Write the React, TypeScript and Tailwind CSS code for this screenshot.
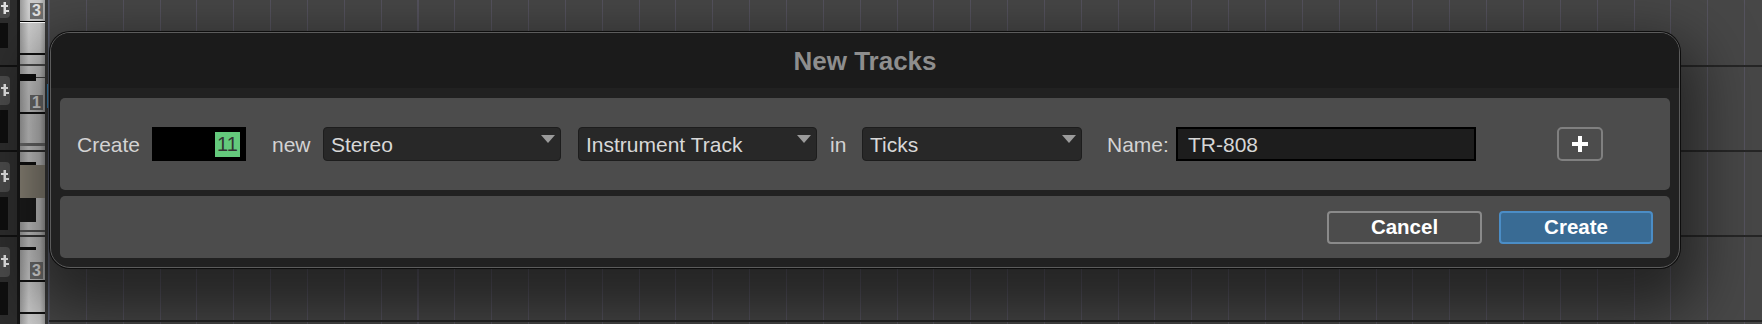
import React from "react";

const Arrow = () => (
  <svg width="14" height="8" viewBox="0 0 14 8" className="mt-[7px] shrink-0">
    <polygon points="0,0 14,0 7,8" fill="#9b9b9b" />
  </svg>
);

const Select = ({ label, className }: { label: string; className: string }) => (
  <div className={`flex h-[34px] shrink-0 items-start justify-between rounded-[4px] border border-[#1d1d1d] bg-[#282828] pl-[7px] pr-[5px] ${className}`}>
    <span className="self-center text-[21px] leading-none text-[#d8d8d8]">{label}</span>
    <Arrow />
  </div>
);

const TrackBtn = ({ className }: { className: string }) => (
  <div className={`flex w-[10px] items-center justify-end overflow-hidden bg-[#4b4b4b] ${className}`}>
    <svg width="9" height="14" viewBox="0 0 9 14">
      <rect x="0" y="3" width="7" height="2" fill="#e2e2e2" />
      <rect x="2.5" y="0" width="2.5" height="12" fill="#e2e2e2" />
      <rect x="4" y="8" width="4" height="2" fill="#e2e2e2" />
    </svg>
  </div>
);

const Badge = ({ n, className }: { n: string; className: string }) => (
  <div className={`ml-[10px] flex w-[13px] items-center justify-center bg-[#6f6f6f] text-[16px] font-bold leading-none text-[#e4e4e4] ${className}`}>
    {n}
  </div>
);

const App = () => {
  return (
    <div className="relative flex h-[324px] w-[1762px] overflow-hidden bg-[#474747] font-['Liberation_Sans',Arial,sans-serif]">
      {/* track headers strip */}
      <div className="flex h-full w-[49px] shrink-0">
        <div className="flex w-[17px] flex-col bg-[#2d2d2d]">
          <TrackBtn className="h-[18px] rounded-br-[4px]" />
          <div className="h-[5px]" />
          <div className="h-[25px] w-[8px] bg-[#0f0f0f]" />
          <div className="h-[17px]" />
          <div className="h-[2px] bg-[#111]" />
          <div className="h-[9px]" />
          <TrackBtn className="h-[29px] rounded-r-[4px]" />
          <div className="h-[5px]" />
          <div className="h-[33px] w-[8px] bg-[#0f0f0f]" />
          <div className="h-[7px]" />
          <div className="h-[2px] bg-[#111]" />
          <div className="h-[10px]" />
          <TrackBtn className="h-[30px] rounded-r-[4px]" />
          <div className="h-[5px]" />
          <div className="h-[33px] w-[8px] bg-[#0f0f0f]" />
          <div className="h-[5px]" />
          <div className="h-[2px] bg-[#111]" />
          <div className="h-[10px]" />
          <TrackBtn className="h-[30px] rounded-r-[4px]" />
          <div className="h-[5px]" />
          <div className="h-[33px] w-[8px] bg-[#0f0f0f]" />
        </div>
        <div className="w-[3px] bg-[#161616]" />
        <div className="flex w-[25px] flex-col bg-[linear-gradient(to_right,#9a9a9a,#d0d0d0_35%,#c8c8c8_80%,#a2a2a2)]">
          <div className="flex h-[21px] flex-col pt-[3px]">
            <Badge n="3" className="h-[16px]" />
          </div>
          <div className="h-[1px] bg-black" />
          <div className="h-[1px] bg-white" />
          <div className="h-[30px]" />
          <div className="h-[2px] bg-[#111]" />
          <div className="h-[9px]" />
          <div className="h-[2px] bg-[#4a4a4a]" />
          <div className="h-[8px]" />
          <div className="flex h-[7px] items-center">
            <div className="h-full w-[16px] bg-[#0f0f0f]" />
            <div className="h-[1px] flex-1 bg-[#444]" />
          </div>
          <div className="flex h-[31px] flex-col pt-[14px]">
            <Badge n="1" className="h-[15px]" />
          </div>
          <div className="h-[2px] bg-[#111]" />
          <div className="h-[29px]" />
          <div className="h-[3px] bg-[#6a6a6a]" />
          <div className="h-[4px]" />
          <div className="h-[2px] bg-[#333]" />
          <div className="h-[10px]" />
          <div className="h-[3px] w-[16px] bg-[#0f0f0f]" />
          <div className="h-[33px] bg-[#8a8477]" />
          <div className="flex h-[24px]">
            <div className="h-full w-[16px] bg-[#1c1c1c]" />
          </div>
          <div className="h-[8px]" />
          <div className="h-[2px] bg-[#555]" />
          <div className="h-[3px]" />
          <div className="h-[2px] bg-[#3a3a3a]" />
          <div className="h-[10px]" />
          <div className="h-[3px] w-[16px] bg-[#0f0f0f]" />
          <div className="flex h-[30px] flex-col pt-[12px]">
            <Badge n="3" className="h-[17px]" />
          </div>
          <div className="h-[2px] bg-[#111]" />
          <div className="h-[30px]" />
          <div className="h-[2px] bg-[#111]" />
        </div>
        <div className="flex w-[4px] flex-col border-r border-[#5a6070] bg-[#3a3a3a]">
          <div className="h-[84px]" />
          <div className="ml-auto h-[24px] w-[1px] bg-[#3f8fc4]" />
        </div>
      </div>

      {/* arrange grid */}
      <div className="flex flex-1 flex-col bg-[repeating-linear-gradient(to_right,#55535e_0px,#55535e_1px,transparent_1px,transparent_36.85px)]">
        <div className="h-[67px] border-b-2 border-[#262626]" />
        <div className="h-[85px] border-b-2 border-[#262626]" />
        <div className="h-[85px] border-b-2 border-[#262626]" />
        <div className="h-[85px] border-b-2 border-[#262626]" />
      </div>

      {/* New Tracks dialog */}
      <div className="absolute left-[50px] top-[32px] flex h-[236px] w-[1630px] flex-col overflow-hidden rounded-[20px] border border-[#5c5c5c] bg-[#212121] shadow-[0_0_0_1px_#0d0d0d,0_26px_60px_18px_rgba(0,0,0,0.5)]">
        <div className="flex h-[55px] shrink-0 items-center justify-center bg-[#1b1b1b]">
          <h1 className="text-[26px] font-bold leading-none text-[#8e8e8e]">New Tracks</h1>
        </div>
        <div className="flex flex-1 flex-col gap-[6px] px-[9px] pb-[9px] pt-[10px]">
          <div className="flex h-[92px] items-center rounded-[5px] bg-[#4c4c4c] pl-[17px] text-[21px] leading-none text-[#d3d3d3]">
            <div className="w-[75px] shrink-0">Create</div>
            <div className="flex h-[34px] w-[94px] shrink-0 items-center justify-end bg-black pr-[6px]">
              <span className="flex h-[25px] w-[25px] items-center justify-center bg-[#64c97c] text-[20px] leading-none text-[#333]">11</span>
            </div>
            <div className="w-[77px] shrink-0 pl-[26px]">new</div>
            <Select label="Stereo" className="w-[238px]" />
            <Select label="Instrument Track" className="ml-[17px] w-[239px]" />
            <div className="w-[45px] shrink-0 pl-[13px]">in</div>
            <Select label="Ticks" className="w-[220px]" />
            <div className="w-[94px] shrink-0 pl-[25px]">Name:</div>
            <div className="flex h-[34px] w-[300px] shrink-0 items-center border-2 border-black bg-[#1d1d1d] pl-[10px] text-[#d6d6d6]">
              TR-808
            </div>
            <button className="ml-[81px] flex h-[34px] w-[46px] shrink-0 items-center justify-center rounded-[5px] border-2 border-[#808080]">
              <svg width="16" height="16" viewBox="0 0 16 16">
                <rect x="0" y="6" width="16" height="4" fill="#fff" />
                <rect x="6" y="0" width="4" height="16" fill="#fff" />
              </svg>
            </button>
          </div>
          <div className="flex h-[62px] items-center justify-end gap-[17px] rounded-[5px] bg-[#4c4c4c] pr-[17px]">
            <button className="flex h-[33px] w-[155px] items-center justify-center rounded-[4px] border-2 border-[#8a8a8a] text-[20.5px] font-bold leading-none text-white">
              Cancel
            </button>
            <button className="flex h-[33px] w-[154px] items-center justify-center rounded-[4px] border-2 border-[#4b8dc6] bg-[#396b94] text-[20.5px] font-bold leading-none text-white">
              Create
            </button>
          </div>
        </div>
      </div>
    </div>
  );
};

export default App;
